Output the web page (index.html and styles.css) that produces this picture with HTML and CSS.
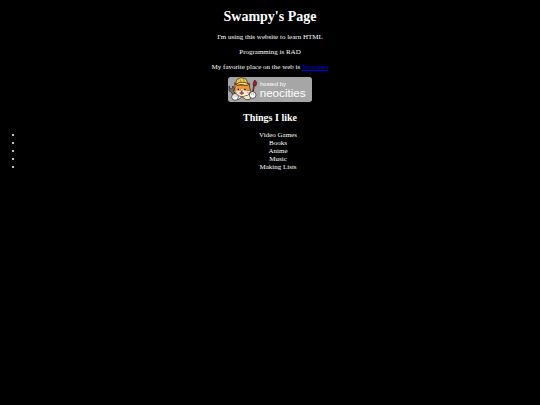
FILE: index.html
```html
<!DOCTYPE html>
<html lang="en">
<head>
    <meta charset="UTF-8">
    <meta name="viewport" content="width=device-width, initial-scale=1.0">
    <title>Swampy's Page</title>
    <link rel="stylesheet" href="styles.css">
</head>
<body>
    <h1>Swampy's Page</h1>
    <p>I'm using this website to learn HTML</p>
    <p>Programming is RAD</p>
    <p>My favorite place on the web is <a href="https://neocities.org">Neocities</a></p>
    <svg class="badge" viewBox="0 0 252 75" role="img" aria-label="Hosted by Neocities">
        <rect width="252" height="75" rx="8" fill="#a6a6a6"/>
        <!-- wrench -->
        <path d="M3 27l4 9 6-1 1-8 5 7-1 8 8 16-7 4-9-17-7-4z" fill="#777" stroke="#222" stroke-width="2"/>
        <!-- arms and body -->
        <path d="M28 53l-8 7 10 9 12-10 12 9 12-1 7-10-9-7z" fill="#f4e6cf" stroke="#222" stroke-width="2"/>
        <!-- head -->
        <path d="M20 17l6 7h32l6-5 1 13 4 12-9 10-18 5-17-5-8-11 4-12z" fill="#ed9638" stroke="#222" stroke-width="2"/>
        <path d="M22 40l13 1 7-5 8 5 16 1-6 11-18 5-15-5z" fill="#fff0dd"/>
        <path d="M22 22L27 7l12-5 14 3 8 15-13-3-14 1z" fill="#f4c94d" stroke="#32230d" stroke-width="2"/>
        <path d="M24 21l12-5 15 0 14 7-13 2-13-3-12 3z" fill="#ffe17b" stroke="#32230d" stroke-width="2"/>
        <path d="M36 7l3 8m7-10l3 10" fill="none" stroke="#a66a20" stroke-width="2"/>
        <path d="M31 35v5m20-5v5" stroke="#20140c" stroke-width="4"/>
        <path d="M38 41h6l-3 4zM34 48l7-3 7 3-7 5z" fill="#b84034" stroke="#3b2011"/>
        <path d="M17 39l11 3m-10 7l10-3m39-7l-11 3m10 7l-10-3" fill="none" stroke="#4b2a16"/>
        <!-- paintbrush -->
        <path d="M80 9l6 7-2 10-7 2-2-8z" fill="#a91d2d" stroke="#30151a" stroke-width="2"/>
        <path d="M78 26l-4 22" fill="none" stroke="#5c3928" stroke-width="5"/>
        <circle cx="21" cy="60" r="10" fill="#fff" stroke="#222" stroke-width="2"/>
        <circle cx="74" cy="54" r="10" fill="#fff" stroke="#222" stroke-width="2"/>
        <path d="M18 54v7m6-7v7m47-13v7m6-7v7" stroke="#999" stroke-width="2"/>
        <text class="badge-small" x="96" y="26">hosted by</text>
        <text class="badge-name" x="95" y="59">neocities</text>
    </svg>
    <h2>Things I like</h2>
    <ul>
        <li>Video Games</li>
        <li>Books</li>
        <li>Anime</li>
        <li>Music</li>
        <li>Making Lists</li>
    </ul>
</body>
</html>
```
FILE: styles.css
```css
body {
    background-color: #000000;
    color: #ffffff;
    font-family: "Liberation Serif", "Times New Roman", serif;
    font-size: 7px;
    line-height: 8px;
    margin: 0 3px;
    text-align: center;
}

h1 {
    font-size: 14px;
    line-height: 16px;
    margin: 9px 0 8px;
}

p {
    margin: 0 0 6px;
}

p + p {
    margin-top: 7px;
}

a {
    color: #0000ee;
    text-decoration-thickness: 1px;
}

.badge {
    display: block;
    width: 84px;
    height: 25px;
    margin: 0 auto;
}

.badge-small,
.badge-name {
    fill: #ffffff;
    font-family: "Liberation Sans", Arial, sans-serif;
}

.badge-small {
    font-size: 18px;
}

.badge-name {
    font-size: 35px;
}

h2 {
    font-size: 10px;
    line-height: 12px;
    margin: 10px 0 7px;
}

ul {
    margin: 0;
    padding: 0 4px 0 20px;
}
```
